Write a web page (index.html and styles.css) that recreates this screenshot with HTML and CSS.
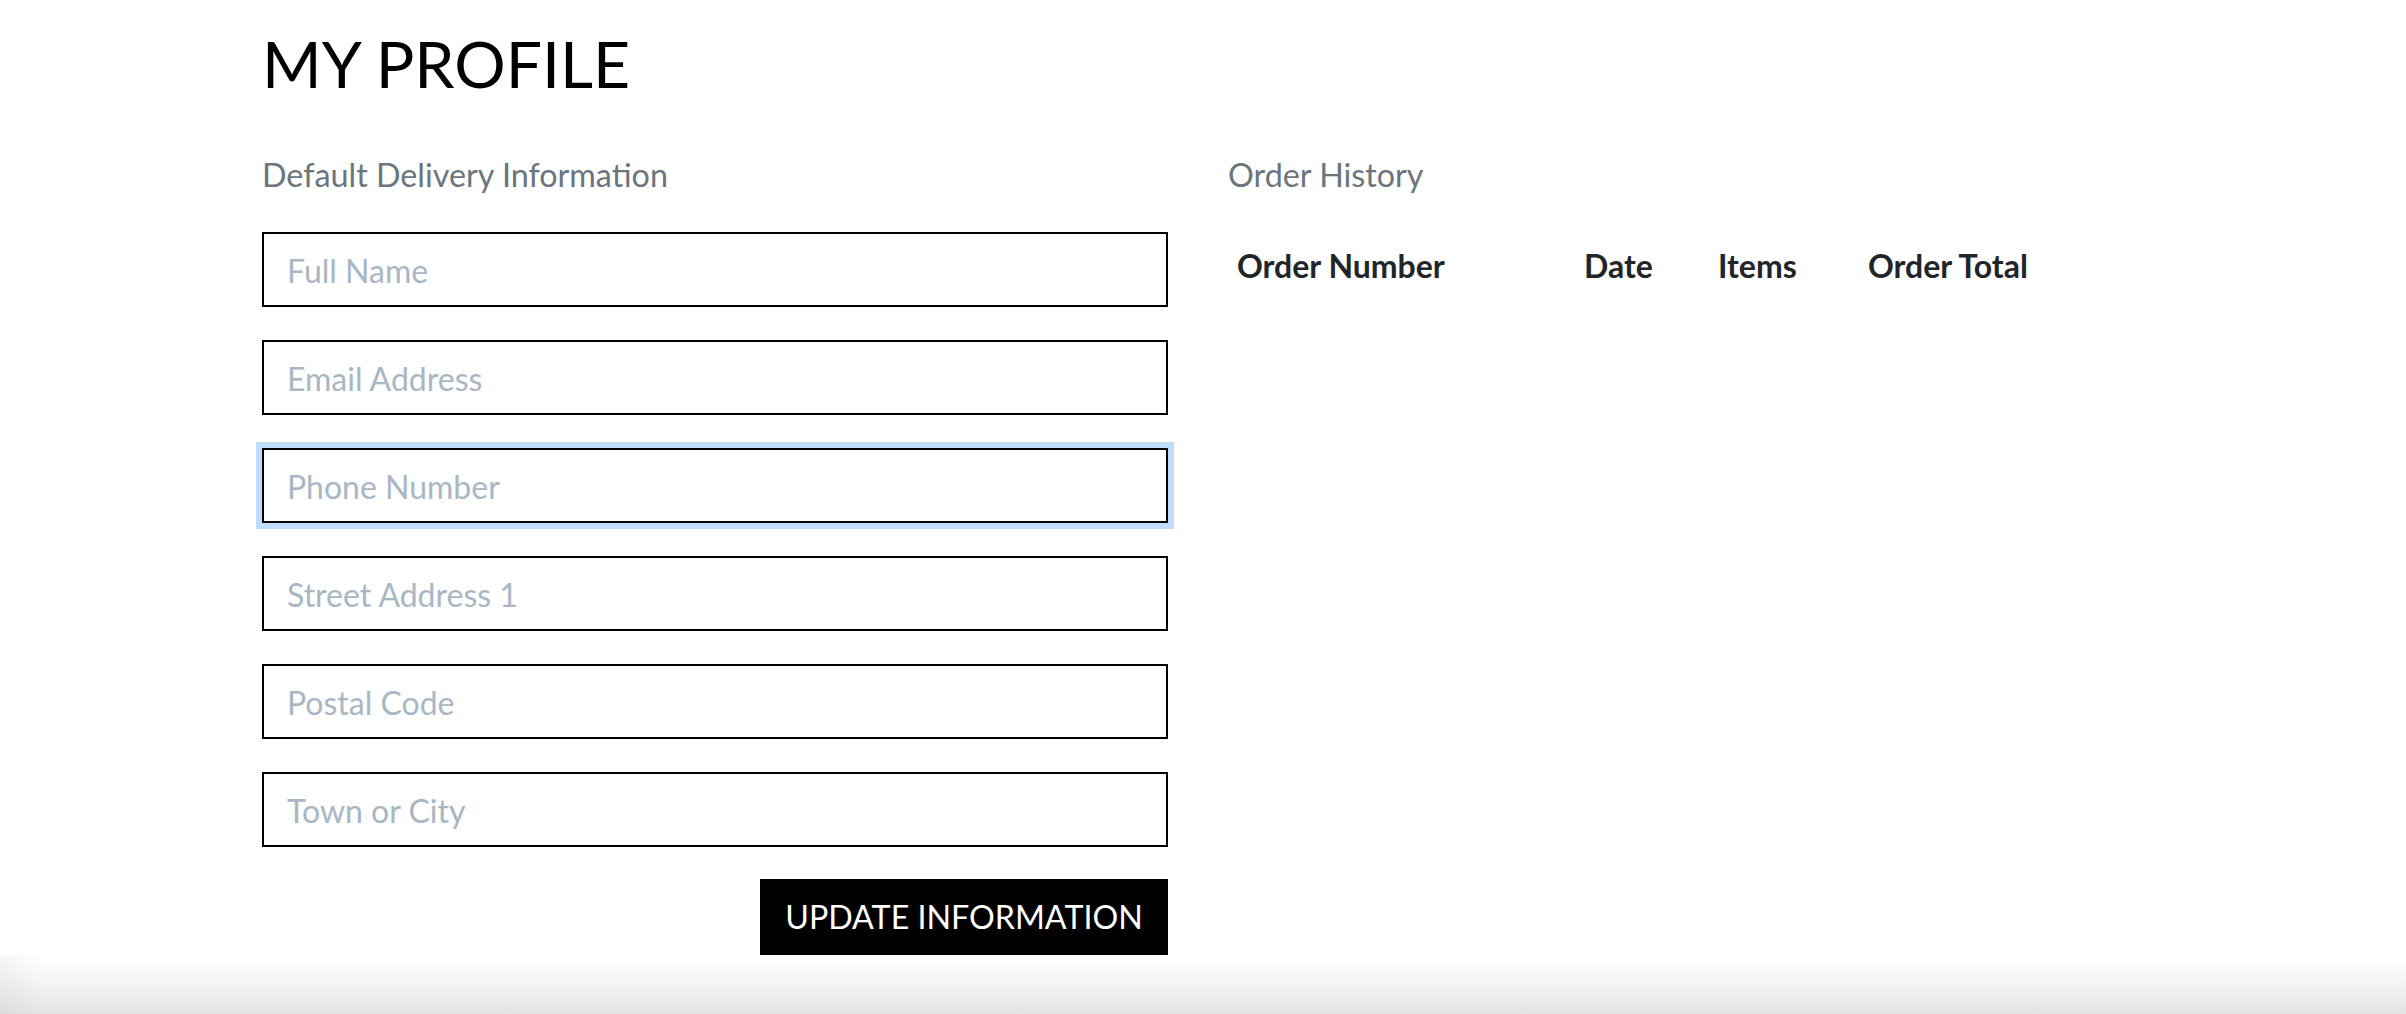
FILE: index.html
```html
<!DOCTYPE html>
<html lang="en">
<head>
<meta charset="utf-8">
<title>My Profile</title>
<link rel="stylesheet" href="styles.css">
</head>
<body>
<main class="page">
  <h1 class="title">MY PROFILE</h1>
  <div class="columns">
    <section class="col">
      <p class="section-label">Default Delivery Information</p>
      <form class="profile-form">
        <input class="field" type="text" placeholder="Full Name">
        <input class="field" type="email" placeholder="Email Address">
        <input class="field field-focus" type="tel" placeholder="Phone Number">
        <input class="field" type="text" placeholder="Street Address 1">
        <input class="field" type="text" placeholder="Postal Code">
        <input class="field" type="text" placeholder="Town or City">
        <div class="actions">
          <button class="btn" type="button">UPDATE INFORMATION</button>
        </div>
      </form>
    </section>
    <section class="col">
      <p class="section-label">Order History</p>
      <table class="orders">
        <colgroup>
          <col class="c-num"><col class="c-date"><col class="c-items"><col class="c-total">
        </colgroup>
        <thead>
          <tr>
            <th>Order Number</th>
            <th>Date</th>
            <th>Items</th>
            <th>Order Total</th>
          </tr>
        </thead>
        <tbody></tbody>
      </table>
    </section>
  </div>
</main>
<div class="page-fade"></div>
</body>
</html>
```

FILE: styles.css
```css
html, body {
  margin: 0;
  padding: 0;
  background: #fff;
}
body {
  font-family: Lato, "Open Sans", "Liberation Sans", sans-serif;
  color: #212529;
  height: 1014px;
  overflow: hidden;
  display: flex;
  flex-direction: column;
}
.page {
  padding: 25px 0 0 262px;
  flex: 0 0 auto;
}
.title {
  margin: 0;
  font-size: 64.3px;
  font-weight: 400;
  line-height: 1.2;
  color: #000;
}
.columns {
  display: grid;
  grid-template-columns: 906px 906px;
  column-gap: 60px;
  margin-top: 54px;
}
.section-label {
  margin: 0;
  font-size: 32.3px;
  line-height: 1.2;
  color: #6c757d;
}
.profile-form {
  display: flex;
  flex-direction: column;
  gap: 33px;
  margin-top: 37px;
}
.field {
  box-sizing: border-box;
  width: 906px;
  height: 75px;
  margin: 0;
  border: 2px solid #000;
  border-radius: 0;
  padding: 2px 23px 0;
  font-family: Lato, "Open Sans", "Liberation Sans", sans-serif;
  font-size: 32px;
  color: #495057;
  background: #fff;
  outline: none;
}
.field::placeholder {
  color: #a9b6c4;
  opacity: 1;
}
.field-focus {
  box-shadow: 0 0 0 6px #c0ddfc;
}
.actions {
  display: flex;
  justify-content: flex-end;
  margin-top: -1px;
}
.btn {
  box-sizing: border-box;
  width: 408px;
  height: 76px;
  border: 0;
  border-radius: 0;
  background: #000;
  color: #fff;
  font-family: Lato, "Open Sans", "Liberation Sans", sans-serif;
  font-size: 32.2px;
  padding: 0;
  cursor: pointer;
}
.orders {
  margin-top: 44px;
  border-collapse: collapse;
  table-layout: fixed;
  width: 906px;
}
.c-num { width: 347px; }
.c-date { width: 134px; }
.c-items { width: 150px; }
.orders th {
  text-align: left;
  font-size: 32px;
  font-weight: 700;
  line-height: 1.2;
  padding: 8px 8px 8px 9px;
  color: #212529;
  white-space: nowrap;
}
.page-fade {
  flex: 1 1 auto;
  margin-top: 0;
  background:
    linear-gradient(to right, rgba(0,0,0,0.035), rgba(0,0,0,0) 40px),
    linear-gradient(to bottom, #ffffff 0%, #f6f6f6 40%, #e3e3e3 100%);
}
```
